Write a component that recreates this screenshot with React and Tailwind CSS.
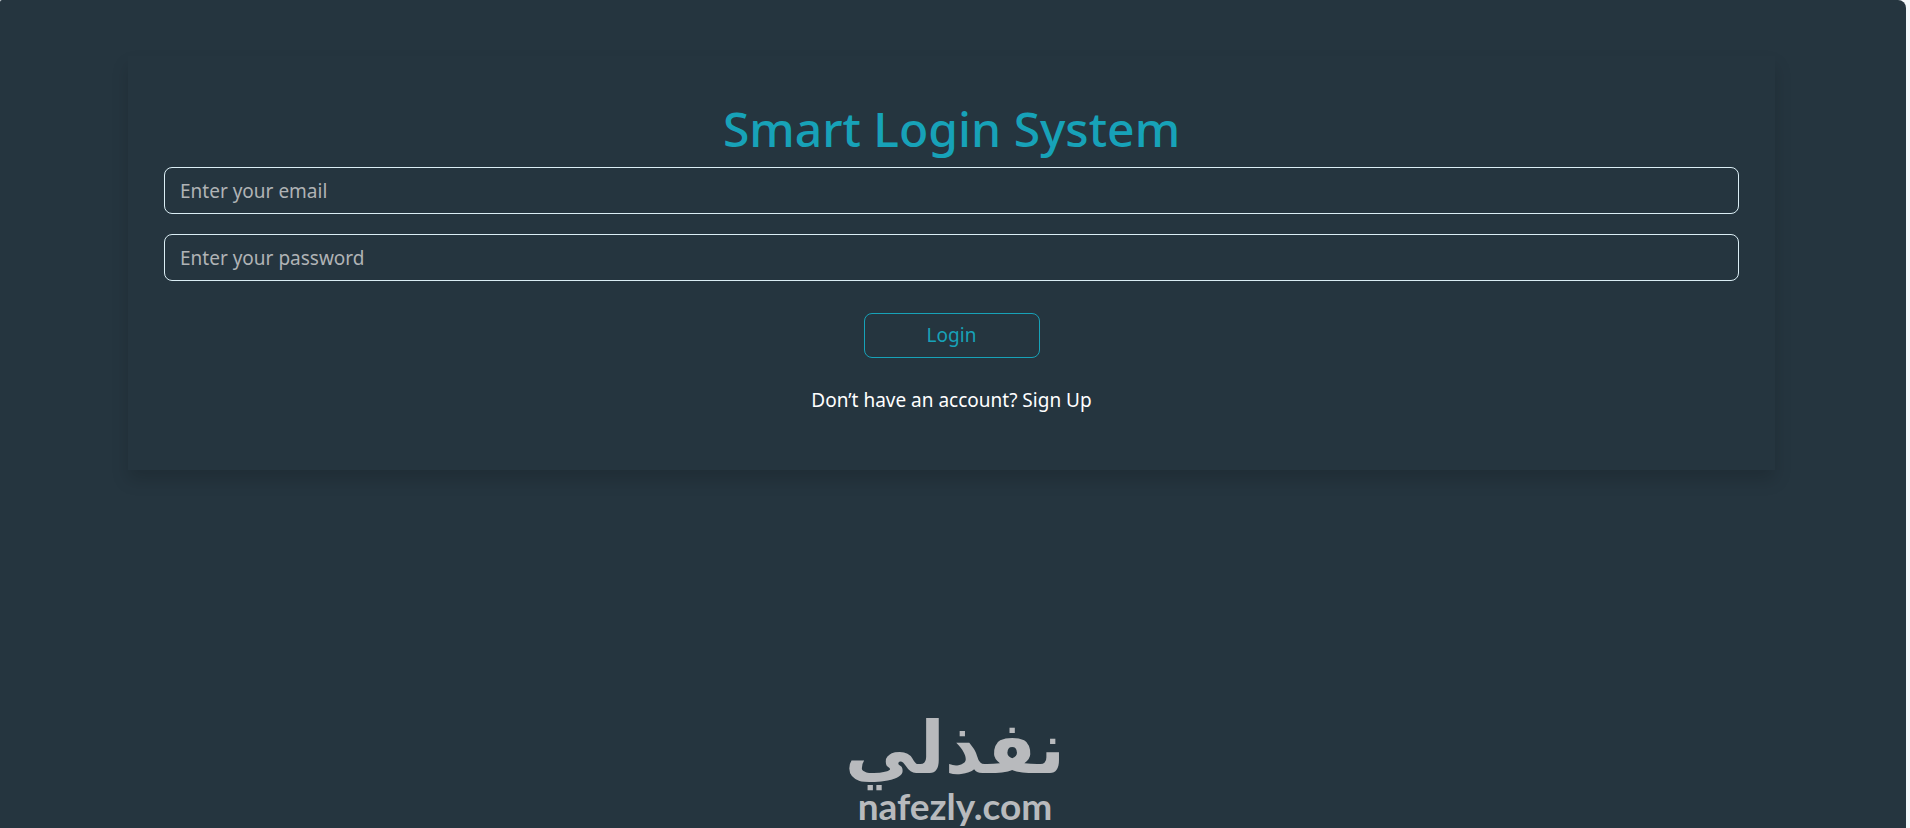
const inputClass =
  'h-[47px] w-full rounded-lg border border-[#dbeef5] bg-transparent px-[15px] text-[19px] text-white placeholder:text-[#b0b3b5] placeholder:opacity-100 outline-none'

function LoginForm() {
  return (
    <form
      className="mr-[131px] ml-32 mt-14 flex flex-col items-center px-9 pt-[43px] pb-14 shadow-[0_10px_16px_rgba(0,0,0,0.15)]"
      onSubmit={e => e.preventDefault()}
    >
      <h1 className="mb-2 text-5xl leading-[60px] font-medium text-[#17a2b8]">Smart Login System</h1>
      <div className="flex w-full flex-col gap-5">
        <input type="email" aria-label="Email" placeholder="Enter your email" className={inputClass} />
        <input type="password" aria-label="Password" placeholder="Enter your password" className={inputClass} />
      </div>
      <button
        type="submit"
        className="mt-8 h-[45px] w-44 rounded-lg border border-[#17a2b8] text-[19px] text-[#17a2b8]"
      >
        Login
      </button>
      <p className="mt-7 text-[19px] leading-7 text-white">
        Don’t have an account? <a href="#signup">Sign Up</a>
      </p>
    </form>
  )
}

function Brand() {
  return (
    <footer className="mt-auto ml-1 flex flex-col items-center pb-1 text-[#b8babd]">
      <span lang="ar" dir="rtl" className="font-['DejaVu_Sans'] text-7xl leading-[80px] font-bold">
        نفذلي
      </span>
      <span className="font-[Lato] text-[37px] leading-9 font-bold">nafezly.com</span>
    </footer>
  )
}

export default function App() {
  return (
    <div className="bg-[#f3f7fa] pr-1 font-['Noto_Sans','Open_Sans',sans-serif]">
      <main className="flex min-h-screen flex-col overflow-hidden rounded-tl-xs rounded-tr-lg bg-[#25353f]">
        <LoginForm />
        <Brand />
      </main>
    </div>
  )
}
